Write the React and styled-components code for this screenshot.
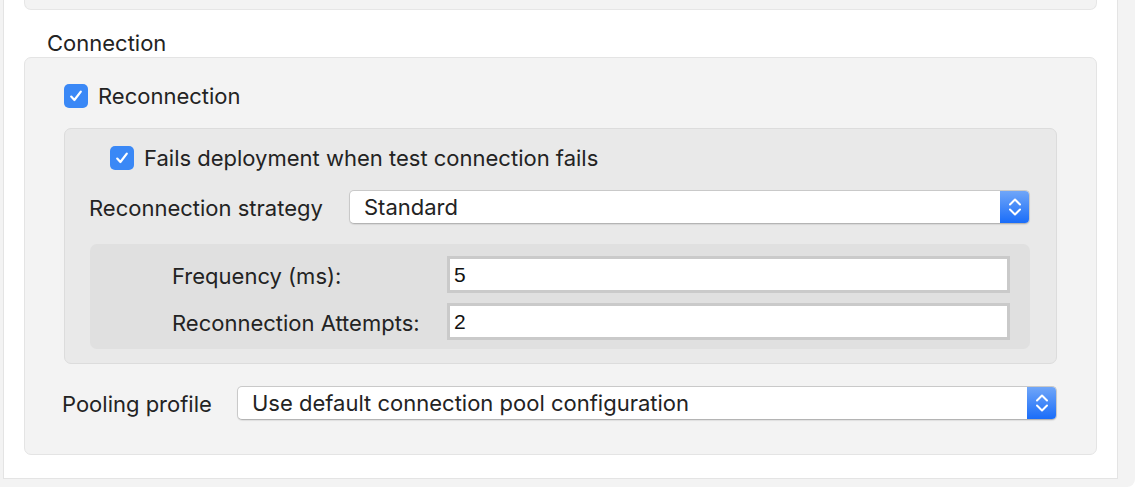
import React from 'react';
import styled, { createGlobalStyle } from 'styled-components';

const GlobalStyle = createGlobalStyle`
    html, body {
        margin: 0;
        padding: 0;
        background: #fff;
    }
    body {
        font-family: Inter, "Liberation Sans", sans-serif;
        color: #232323;
    }
`;

const Frame = styled.div`
    width: 1135px;
    height: 487px;
    background: #f3f3f3;
    border-bottom-right-radius: 8px;
    padding-left: 3px;
    box-sizing: border-box;
`;

const Panel = styled.div`
    width: 1115px;
    height: 479px;
    box-sizing: border-box;
    background: #fff;
    border: 1px solid #e4e4e4;
    border-top: none;
    padding: 0 20px 0 20px;
    display: flex;
    flex-direction: column;
`;

const PrevSection = styled.div`
    height: 9px;
    background: #f3f3f3;
    border: 1px solid #e6e6e6;
    border-top: none;
    border-radius: 0 0 7px 7px;
`;

const SectionTitle = styled.div`
    font-size: 22px;
    line-height: 26px;
    margin: 20px 0 0 23px;
    height: 27px;
`;

const Group = styled.div`
    height: 398px;
    box-sizing: border-box;
    background: #f3f3f3;
    border: 1px solid #e4e4e4;
    border-radius: 7px;
    padding: 26px 39px 0 39px;
    display: flex;
    flex-direction: column;
`;

const CheckRow = styled.label`
    display: flex;
    align-items: center;
    gap: 10px;
    font-size: 22px;
    height: 24px;
    margin-left: ${p => p.$indent || 0}px;
`;

const Box = styled.span`
    width: 24px;
    height: 24px;
    border-radius: 5px;
    background: #3a88f6;
    display: flex;
    align-items: center;
    justify-content: center;
    flex: none;
`;

const Nested = styled.div`
    margin-top: 20px;
    height: 236px;
    box-sizing: border-box;
    background: #e9e9e9;
    border: 1px solid #dcdcdc;
    border-radius: 7px;
    padding: 17px 26px 0 24px;
    display: flex;
    flex-direction: column;
`;

const FieldRow = styled.div`
    display: flex;
    align-items: center;
    margin-top: ${p => p.$top || 0}px;
    margin-left: ${p => p.$left || 0}px;
`;

const FieldLabel = styled.span`
    font-size: 22px;
    flex: none;
    width: ${p => p.$w}px;
    padding-top: 2px;
`;

const Select = styled.div`
    flex: 1;
    height: 34px;
    box-sizing: border-box;
    display: flex;
    align-items: stretch;
    background: #fff;
    border: 1px solid #c9c9c9;
    border-bottom-color: #b4b4b4;
    border-radius: 5px;
    box-shadow: 0 1px 1px rgba(0, 0, 0, 0.08);
    overflow: hidden;
`;

const SelectValue = styled.span`
    flex: 1;
    display: flex;
    align-items: center;
    padding-left: 14px;
    font-size: 22px;
`;

const Stepper = styled.span`
    width: 29px;
    flex: none;
    background: linear-gradient(#70a6f8, #1a6df9);
    display: flex;
    align-items: center;
    justify-content: center;
`;

const Timing = styled.div`
    margin: 20px 0 0 1px;
    height: 105px;
    box-sizing: border-box;
    background: #e0e0e0;
    border-radius: 7px;
    padding: 12px 20px 0 82px;
    display: grid;
    grid-template-columns: 275px 1fr;
    grid-auto-rows: 37px;
    row-gap: 10px;
    align-items: center;
`;

const Input = styled.div`
    height: 37px;
    box-sizing: border-box;
    background: #fff;
    border: 3px solid #cacaca;
    padding-left: 4px;
    display: flex;
    align-items: center;
    font-family: "Liberation Sans", Arial, sans-serif;
    font-size: 21px;
    color: #111;
`;

const Check = () => (
    <svg width="16" height="16" viewBox="0 0 16 16">
        <path d="M3.2 8.6 L6.4 12 L12.8 3.6" fill="none" stroke="#fff" strokeWidth="2.2" strokeLinecap="round" strokeLinejoin="round" />
    </svg>
);

const Chevrons = () => (
    <svg width="14" height="20" viewBox="0 0 14 20">
        <path d="M2 7.5 L7 2.5 L12 7.5 M2 12.5 L7 17.5 L12 12.5" fill="none" stroke="#fff" strokeWidth="2" strokeLinecap="round" strokeLinejoin="round" />
    </svg>
);

const Dropdown = ({ value }) => (
    <Select>
        <SelectValue>{value}</SelectValue>
        <Stepper><Chevrons /></Stepper>
    </Select>
);

export default function App() {
    return (
        <>
            <GlobalStyle />
            <Frame>
                <Panel>
                    <PrevSection />
                    <SectionTitle>Connection</SectionTitle>
                    <Group>
                        <CheckRow>
                            <Box><Check /></Box>
                            Reconnection
                        </CheckRow>
                        <Nested>
                            <CheckRow $indent={21}>
                                <Box><Check /></Box>
                                Fails deployment when test connection fails
                            </CheckRow>
                            <FieldRow $top={20}>
                                <FieldLabel $w={260}>Reconnection strategy</FieldLabel>
                                <Dropdown value="Standard" />
                            </FieldRow>
                            <Timing>
                                <FieldLabel>Frequency (ms):</FieldLabel>
                                <Input>5</Input>
                                <FieldLabel>Reconnection Attempts:</FieldLabel>
                                <Input>2</Input>
                            </Timing>
                        </Nested>
                        <FieldRow $top={22} $left={-2}>
                            <FieldLabel $w={175}>Pooling profile</FieldLabel>
                            <Dropdown value="Use default connection pool configuration" />
                        </FieldRow>
                    </Group>
                </Panel>
            </Frame>
        </>
    );
}
